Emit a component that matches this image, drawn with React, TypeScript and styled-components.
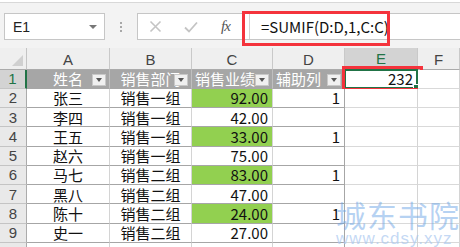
import React from 'react';
import styled, { createGlobalStyle } from 'styled-components';

const GlobalStyle = createGlobalStyle`
  html, body { margin: 0; padding: 0; background: #fff; }
  body { font-family: "Noto Sans CJK SC", "Liberation Sans", sans-serif; }
`;

const Window = styled.div`
  position: relative;
  width: 460px;
  height: 247px;
  overflow: hidden;
  background: #fff;
`;

const Toolbar = styled.div`
  position: relative;
  height: 46px;
  box-sizing: border-box;
  margin-top: 2px;
  border-top: 1px solid #d8d8d8;
  background: #f3f3f3;
  display: flex;
  align-items: flex-start;
  padding: 10px 0 0 4px;
`;

const NameBox = styled.div`
  width: 101px;
  height: 27px;
  box-sizing: border-box;
  border: 1px solid #c6c6c6;
  background: #fff;
  display: flex;
  align-items: center;
  justify-content: space-between;
  padding: 0 7px 0 8px;
  font: 14px "Liberation Sans", sans-serif;
  color: #222;
`;

const Caret = styled.span`
  width: 0;
  height: 0;
  border-left: 4px solid transparent;
  border-right: 4px solid transparent;
  border-top: 4px solid #777;
`;

const Grip = styled.div`
  display: flex;
  flex-direction: column;
  gap: 2px;
  margin: 9px 15px 0 15px;
  span {
    width: 2px;
    height: 2px;
    background: #a8a8a8;
  }
`;

const FormulaBox = styled.div`
  flex: 1;
  height: 27px;
  box-sizing: border-box;
  border: 1px solid #c6c6c6;
  border-right: none;
  background: #fff;
  display: flex;
  align-items: stretch;
`;

const ToolButton = styled.div`
  width: 35px;
  display: flex;
  align-items: center;
  justify-content: center;
`;

const Fx = styled.span`
  font: italic 15px "Liberation Serif", serif;
  color: #555;
  letter-spacing: -1px;
`;

const Divider = styled.div`
  width: 1px;
  margin-left: 6px;
  background: #d4d4d4;
`;

const Formula = styled.div`
  display: flex;
  align-items: center;
  padding-left: 11px;
  font-size: 15px;
  color: #111;
`;

const Highlight = styled.div`
  position: absolute;
  box-sizing: border-box;
  border: 3px solid #f4333c;
  pointer-events: none;
`;

const FormulaHighlight = styled(Highlight)`
  left: 242px;
  top: 8px;
  width: 148px;
  height: 35px;
`;

const Sheet = styled.div`
  display: grid;
  grid-template-columns: 27px 83px 82px 81px 72px 73px 1fr;
  grid-template-rows: 21.5px repeat(10, 19.25px);
`;

const Corner = styled.div`
  position: relative;
  background: #efefef;
  border-right: 1px solid #c4c4c4;
  border-bottom: 1px solid #ababab;
  &::after {
    content: '';
    position: absolute;
    right: 3px;
    bottom: 3px;
    border-left: 11px solid transparent;
    border-bottom: 11px solid #d0d0d0;
  }
`;

const ColHead = styled.div<{ $active?: boolean }>`
  box-sizing: border-box;
  display: flex;
  align-items: flex-end;
  justify-content: center;
  padding-bottom: 1px;
  font: 15px "Liberation Sans", sans-serif;
  color: ${p => (p.$active ? '#217346' : '#444')};
  background: ${p => (p.$active ? '#d3d3d3' : '#efefef')};
  border-right: 1px solid #c9c9c9;
  border-bottom: ${p => (p.$active ? '2px solid #217346' : '1px solid #ababab')};
`;

const RowHead = styled.div<{ $active?: boolean }>`
  box-sizing: border-box;
  display: flex;
  align-items: center;
  justify-content: center;
  font: 15px "Liberation Sans", sans-serif;
  color: ${p => (p.$active ? '#217346' : '#444')};
  background: ${p => (p.$active ? '#d3d3d3' : '#e9e9e9')};
  border-right: ${p => (p.$active ? '2px solid #217346' : '1px solid #ababab')};
  border-bottom: 1px solid #c4c4c4;
  overflow: hidden;
`;

const Cell = styled.div<{
  $align?: 'left' | 'center' | 'right';
  $fill?: string;
  $line?: string;
  $edge?: string;
  $color?: string;
}>`
  position: relative;
  box-sizing: border-box;
  display: flex;
  align-items: center;
  justify-content: ${p =>
    p.$align === 'right' ? 'flex-end' : p.$align === 'center' ? 'center' : 'flex-start'};
  padding: 0 ${p => (p.$align === 'right' ? '4px' : '0')} 0 ${p => (p.$align === 'left' ? '3px' : '0')};
  font-size: 15px;
  color: ${p => p.$color || '#111'};
  white-space: nowrap;
  background: ${p => p.$fill || '#fff'};
  border-right: 1px solid ${p => p.$edge || '#d4d4d4'};
  border-bottom: 1px solid ${p => p.$line || '#d9d9d9'};
`;

const FilterButton = styled.span`
  position: absolute;
  right: 3px;
  top: 4px;
  width: 14px;
  height: 12px;
  box-sizing: border-box;
  background: #f0f0f0;
  border: 1px solid #c8c8c8;
  display: flex;
  align-items: center;
  justify-content: center;
  &::after {
    content: '';
    border-left: 3.5px solid transparent;
    border-right: 3.5px solid transparent;
    border-top: 4px solid #555;
  }
`;

const Selection = styled.div`
  position: absolute;
  inset: -1px -1px -1px -1px;
  border: 2px solid #217346;
  &::after {
    content: '';
    position: absolute;
    right: -4px;
    bottom: -4px;
    width: 5px;
    height: 5px;
    background: #217346;
    border: 1px solid #fff;
  }
`;

const CellHighlight = styled(Highlight)`
  left: -3px;
  top: -4px;
  right: -6px;
  bottom: -3px;
`;

const Watermark = styled.div`
  position: absolute;
  left: 336px;
  top: 199px;
  color: rgba(110, 165, 230, 0.5);
  pointer-events: none;
  line-height: 1;
  white-space: nowrap;
`;

const WatermarkTitle = styled.div`
  font-size: 30px;
  letter-spacing: 1px;
`;

const WatermarkUrl = styled.div`
  margin-top: 0;
  font: 17px "Liberation Sans", sans-serif;
  letter-spacing: 1px;
  color: rgba(170, 200, 240, 0.7);
`;

const TABLE = '#a6a6a6';
const GRID = '#d4d4d4';
const COLS = ['A', 'B', 'C', 'D', 'E', 'F'];

const rows: [string, string, string, boolean][] = [
  ['张三', '销售一组', '92.00', true],
  ['李四', '销售一组', '42.00', false],
  ['王五', '销售一组', '33.00', true],
  ['赵六', '销售一组', '75.00', false],
  ['马七', '销售二组', '83.00', true],
  ['黑八', '销售二组', '47.00', false],
  ['陈十', '销售二组', '24.00', true],
  ['史一', '销售二组', '27.00', false],
];

const headers: [string, 'left' | 'center'][] = [
  ['姓名', 'center'],
  ['销售部门', 'center'],
  ['销售业绩', 'left'],
  ['辅助列', 'left'],
];

function Cross() {
  return (
    <svg width="13" height="13" viewBox="0 0 13 13">
      <path d="M1.5 1.5 L11.5 11.5 M11.5 1.5 L1.5 11.5" stroke="#c4c4c4" strokeWidth="1.6" />
    </svg>
  );
}

function Check() {
  return (
    <svg width="14" height="12" viewBox="0 0 14 12">
      <path d="M1 6.5 L5 10.5 L13 1.5" stroke="#c4c4c4" strokeWidth="1.8" fill="none" />
    </svg>
  );
}

export default function App() {
  return (
    <Window>
      <GlobalStyle />
      <Toolbar>
        <NameBox>
          E1
          <Caret />
        </NameBox>
        <Grip>
          <span />
          <span />
          <span />
        </Grip>
        <FormulaBox>
          <ToolButton>
            <Cross />
          </ToolButton>
          <ToolButton>
            <Check />
          </ToolButton>
          <ToolButton>
            <Fx>fx</Fx>
          </ToolButton>
          <Divider />
          <Formula>=SUMIF(D:D,1,C:C)</Formula>
        </FormulaBox>
        <FormulaHighlight />
      </Toolbar>

      <Sheet>
        <Corner />
        {COLS.map(c => (
          <ColHead key={c} $active={c === 'E'}>
            {c}
          </ColHead>
        ))}

        <RowHead $active>1</RowHead>
        {headers.map(([text, align], i) => (
          <Cell
            key={text}
            $align={align}
            $fill="#a6a6a6"
            $color="#fff"
            $line={TABLE}
            $edge={i === 3 ? TABLE : '#bfbfbf'}
          >
            {text}
            <FilterButton />
          </Cell>
        ))}
        <Cell $align="right">
          232
          <Selection />
          <CellHighlight />
        </Cell>
        <Cell />

        {rows.map(([name, dept, amount, mark], i) => (
          <React.Fragment key={name}>
            <RowHead>{i + 2}</RowHead>
            <Cell $align="center" $line={TABLE} $edge={GRID}>
              {name}
            </Cell>
            <Cell $align="center" $line={TABLE} $edge={GRID}>
              {dept}
            </Cell>
            <Cell $align="right" $line={TABLE} $edge={GRID} $fill={mark ? '#92d050' : undefined}>
              {amount}
            </Cell>
            <Cell $align="right" $line={TABLE} $edge={TABLE}>
              {mark ? '1' : ''}
            </Cell>
            <Cell />
            <Cell />
          </React.Fragment>
        ))}

        <RowHead>10</RowHead>
        <Cell $edge={GRID} />
        <Cell $edge={GRID} />
        <Cell $edge={GRID} />
        <Cell $edge={TABLE} />
        <Cell />
        <Cell />
      </Sheet>

      <Watermark>
        <WatermarkTitle>城东书院</WatermarkTitle>
        <WatermarkUrl>www.cdsy.xyz</WatermarkUrl>
      </Watermark>
    </Window>
  );
}
